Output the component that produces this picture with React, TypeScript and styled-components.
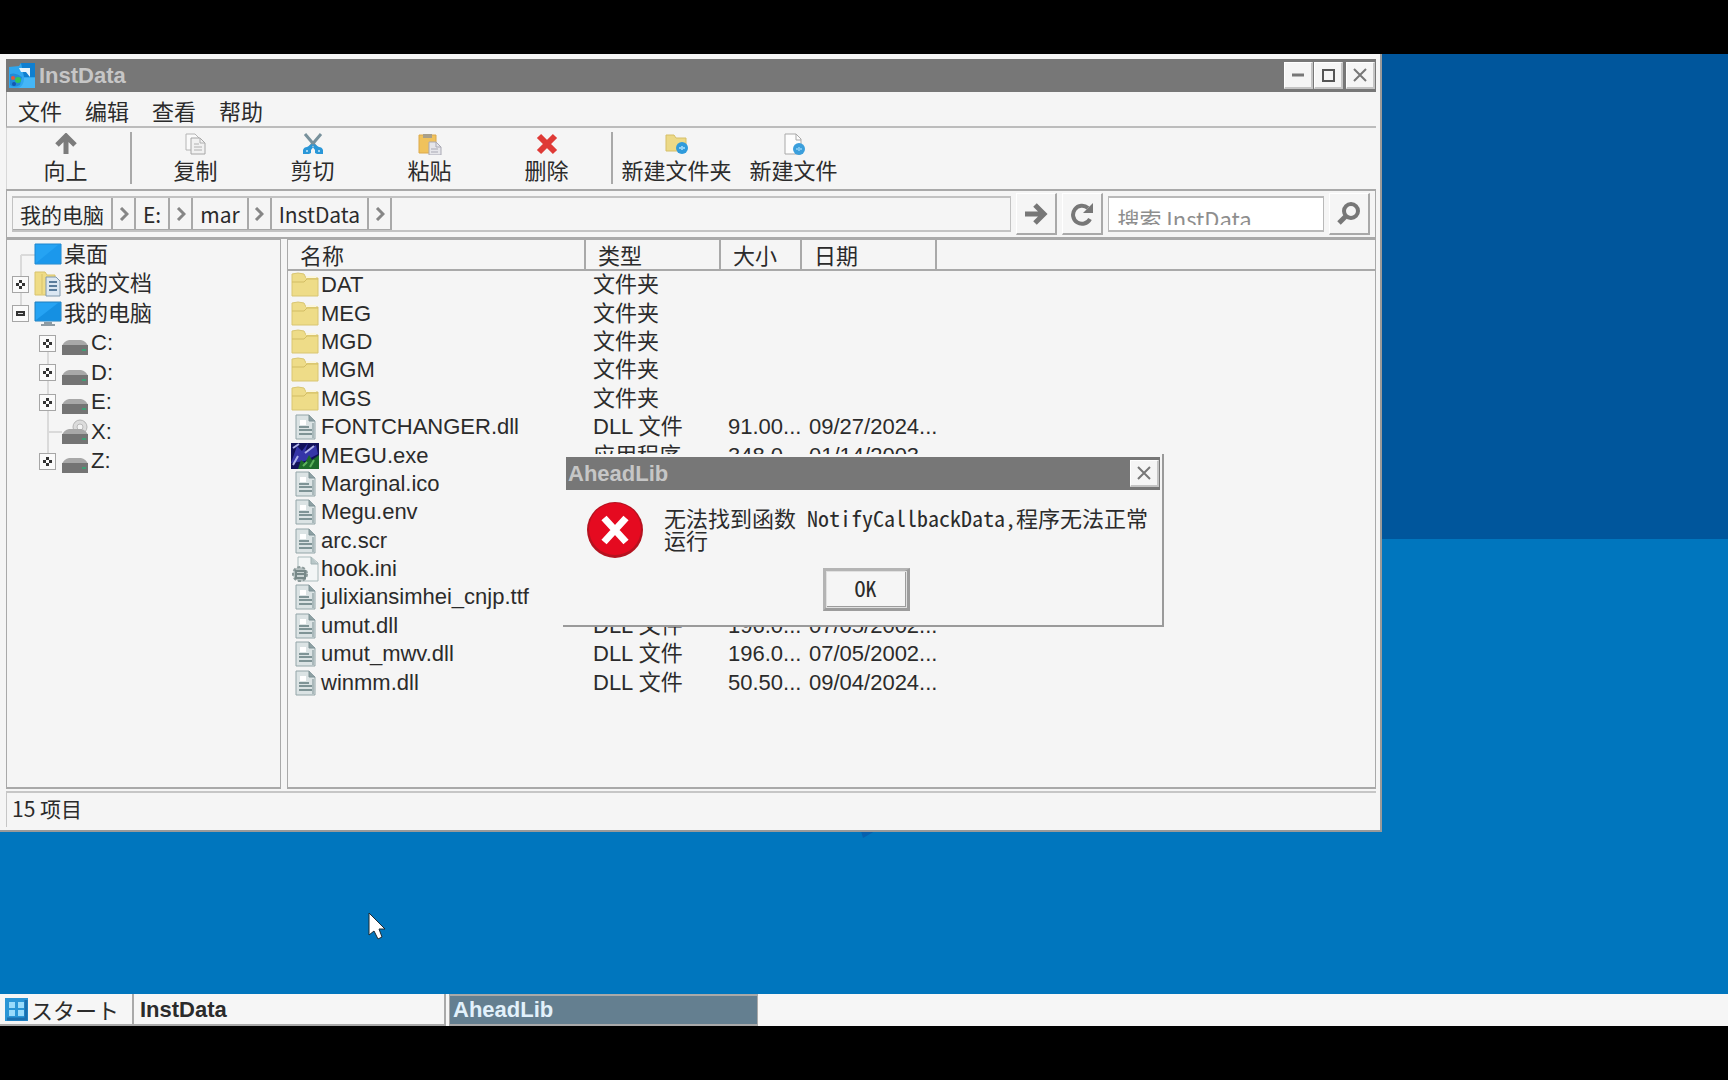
import React from "react";
import styled, { createGlobalStyle, css } from "styled-components";

const sans = `"Liberation Sans", "Noto Sans CJK SC", sans-serif`;
const cjk = `"Noto Sans CJK SC", sans-serif`;
const cjkJp = `"Noto Sans CJK JP", sans-serif`;
const mono = `"Noto Sans Mono CJK SC", "Liberation Mono", "Noto Sans CJK SC", monospace`;

const face = "#f5f5f5";
const line = "#a9a9a9";
const caption = "#777777";
const ink = "#2b2b2b";

const GlobalStyle = createGlobalStyle`
  * { box-sizing: border-box; }
  body { margin: 0; background: #000; color: ${ink}; font: 22px/24px ${sans}; }
  button, input { font: inherit; color: inherit; border-radius: 0; }
  button { padding: 0; margin: 0; border: 0; background: none; }
  svg { display: block; flex: none; }
`;

const Screen = styled.div`
  display: flex;
  flex-direction: column;
  min-height: 100vh;
  padding: 54px 0;
  overflow: hidden;
`;

const Desktop = styled.main`
  position: relative;
  flex: 1;
  background: linear-gradient(#00569c 485px, #0076be 485px);
`;

const Fleck = styled.svg`
  position: absolute;
  left: 861px;
  top: 777px;
`;

const Pointer = styled.svg`
  position: absolute;
  left: 367px;
  top: 858px;
`;

const Frame = styled.section`
  position: absolute;
  display: flex;
  flex-direction: column;
  background: ${face};
  border: solid #9a9a9a;
  border-width: 0 2px 2px 0;
`;

const ExplorerFrame = styled(Frame)`
  left: 0;
  top: 0;
  width: 80%;
  padding: 5px 4px 3px 6px;
`;

const DialogFrame = styled(Frame)`
  left: 563px;
  top: 400px;
  width: 601px;
  padding: 3px 2px 14px 3px;
`;

const Caption = styled.header`
  display: flex;
  align-items: center;
  height: 33px;
  padding: 0 1px 0 2px;
  background: ${caption};
  color: #c6c6c6;
  font-weight: bold;
`;

const CaptionText = styled.h1`
  flex: 1;
  margin: 0 0 0 3px;
  font-size: 22px;
  line-height: 24px;
`;

const DialogTitle = styled(CaptionText)`
  margin-left: 0;
`;

const CaptionButton = styled.button<{ $apart?: boolean }>`
  display: flex;
  align-items: center;
  justify-content: center;
  width: 29px;
  height: 27px;
  margin-left: ${(p) => (p.$apart ? 3 : 1)}px;
  background: ${face};
  border: solid;
  border-width: 1px 2px 2px 1px;
  border-color: #fff #c4c4c4 #c4c4c4 #fff;
`;

const MenuBar = styled.nav`
  display: flex;
  gap: 23px;
  height: 36px;
  padding: 0 11px;
  border-bottom: 2px solid #bcbcbc;
  border-left: 1px solid ${line};
  font-family: ${cjk};
`;

const MenuItem = styled.button`
  height: 36px;
`;

const Toolbar = styled.div`
  display: flex;
  height: 61px;
  border-left: 1px solid #d8d8d8;
  font-family: ${cjk};
`;

const Tool = styled.button`
  display: flex;
  flex-direction: column;
  align-items: center;
  width: 117px;
  padding-top: 5px;
  line-height: 28px;
  white-space: nowrap;
`;

const ToolDivider = styled.div`
  width: 2px;
  margin: 4px 5px 5px 6px;
  background: ${line};
`;

const AddressRow = styled.div`
  display: flex;
  align-items: center;
  gap: 5px;
  height: 50px;
  padding: 0 5px;
  border: solid ${line};
  border-width: 2px 1px 2px 1px;
`;

const Crumbs = styled.div`
  display: flex;
  flex: 1;
  height: 36px;
  border: 2px solid #c2c2c2;
  border-left-width: 1px;
  border-right-width: 1px;
  font-family: ${cjk};
  font-size: 21px;
`;

const Crumb = styled.button`
  padding: 0 7px;
  border-right: 2px solid ${line};
  border-bottom: 1px solid ${line};
  line-height: 28px;
`;

const CrumbArrow = styled.button`
  display: flex;
  align-items: center;
  justify-content: center;
  width: 23px;
  border-right: 2px solid ${line};
  border-bottom: 1px solid ${line};
`;

const RaisedButton = styled.button`
  display: flex;
  align-items: center;
  justify-content: center;
  width: 41px;
  height: 42px;
  border: solid;
  border-width: 1px 2px 2px 1px;
  border-color: #fff ${line} ${line} #fff;
`;

const SearchBox = styled.label`
  width: 216px;
  height: 36px;
  padding-bottom: 5px;
  background: #fff;
  border: 2px solid #b9b9b9;
  border-left-width: 1px;
  border-right-width: 1px;
`;

const SearchInput = styled.input`
  display: block;
  width: 100%;
  height: 27px;
  padding: 13px 8px 0;
  border: 0;
  background: none;
  outline: 0;
  font-family: ${cjk};
  &::placeholder { color: #8e8e8e; opacity: 1; }
`;

const Panes = styled.div`
  display: grid;
  grid-template-columns: 275px 1fr;
  gap: 6px;
  min-height: 550px;
`;

const Pane = styled.div`
  border: solid ${line};
  border-width: 1px 1px 2px 1px;
`;

const TreeList = styled.ul`
  display: grid;
  grid-auto-rows: 1fr;
  position: relative;
  height: 236px;
  margin: 0;
  padding: 0 0 0 5px;
  list-style: none;
`;

const TreeLines = styled.svg`
  position: absolute;
  left: 0;
  top: 0;
`;

const TreeRow = styled.li<{ $depth: number }>`
  display: flex;
  align-items: center;
  gap: 2px;
  position: relative;
  padding-left: ${(p) => p.$depth * 27}px;
`;

const Expander = styled.button<{ $hidden?: boolean }>`
  display: flex;
  align-items: center;
  justify-content: center;
  width: 17px;
  height: 17px;
  margin-right: 3px;
  background: #fafafa;
  border: 1px solid #a6a6a6;
  ${(p) => p.$hidden && css`visibility: hidden;`}
`;

const TreeLabel = styled.span`
  font-family: ${sans};
`;

const FileTable = styled.table`
  width: 100%;
  height: 457px;
  border-collapse: separate;
  border-spacing: 0;
  table-layout: fixed;
`;

const HeadCell = styled.th<{ $last?: boolean }>`
  height: 31px;
  padding: 4px 0 0 12px;
  border-bottom: 2px solid ${line};
  border-right: ${(p) => (p.$last ? "0" : `2px solid ${line}`)};
  font-weight: normal;
  text-align: left;
`;

const Cell = styled.td`
  padding: 0 0 0 7px;
  white-space: nowrap;
`;

const NameCell = styled(Cell)`
  padding-left: 3px;
`;

const FileName = styled.div`
  display: flex;
  align-items: center;
  gap: 2px;
`;

const StatusBar = styled.footer`
  height: 36px;
  margin-top: 2px;
  padding: 3px 5px 0;
  border: solid #c6c6c6;
  border-width: 2px 0 0 1px;
  font-family: ${cjk};
  font-size: 21px;
`;

const DialogBody = styled.div`
  display: flex;
  gap: 20px;
  padding: 11px 8px 0 20px;
`;

const Message = styled.p`
  margin: 5px 0 0;
  font-family: ${mono};
  font-size: 22px;
  line-height: 22px;
`;

const OkButton = styled.button`
  align-self: center;
  width: 87px;
  height: 43px;
  margin: 9px 0 0 6px;
  padding-bottom: 3px;
  border: solid;
  border-width: 3px 5px 5px 4px;
  border-color: #b4b4b4 #9c9c9c #9c9c9c #b4b4b4;
  outline: 1px solid #e0e0e0;
  outline-offset: -4px;
  font-family: ${mono};
`;

const Taskbar = styled.footer`
  display: flex;
  height: 32px;
  background: #f6f6f6;
`;

const StartButton = styled.button`
  display: flex;
  align-items: center;
  gap: 3px;
  width: 134px;
  padding-left: 5px;
  border-right: 2px solid ${line};
  border-bottom: 2px solid ${line};
  font-family: ${cjkJp};
`;

const Task = styled.button<{ $active?: boolean }>`
  width: 312px;
  padding: 2px 0 0 6px;
  border: solid ${line};
  border-width: 0 2px 2px 0;
  font-weight: bold;
  text-align: left;
  ${(p) =>
    p.$active &&
    css`
      margin-left: 3px;
      width: 309px;
      padding: 0 0 0 3px;
      border-width: 2px 1px 2px 1px;
      background: #647f90;
      color: #e2f1fb;
    `}
`;

/* ---------- drawings ---------- */

const AppIcon = () => (
  <svg width="28" height="28" viewBox="0 0 28 28">
    <path d="M1 5l10-1 2-3h14v25H1z" fill="#2fa6ee" />
    <path d="M13 1h14v14H16z" fill="#0f7fd0" />
    <path d="M11 6h11v9l-4-5h-5z" fill="#e6f4fd" />
    <path d="M2 12q6-2 12 3l-2 8q-6 3-10 0z" fill="#1f8bd8" />
    <circle cx="5" cy="16" r="2" fill="#e0593a" />
    <circle cx="10" cy="18" r="3" fill="#31c25a" />
    <circle cx="6" cy="22" r="2" fill="#1558b0" />
    <path d="M16 16h11v10H10c4-1 6-5 6-10z" fill="#45b6f7" />
  </svg>
);

const MinIcon = () => (
  <svg width="14" height="14" viewBox="0 0 14 14"><path d="M1 7h12" stroke="#777" strokeWidth="3" /></svg>
);
const MaxIcon = () => (
  <svg width="15" height="15" viewBox="0 0 15 15"><path d="M2 2h11v11H2z" fill="none" stroke="#555" strokeWidth="2" /></svg>
);
const CloseIcon = () => (
  <svg width="14" height="14" viewBox="0 0 14 14"><path d="M1 1l12 12M13 1L1 13" stroke="#777" strokeWidth="2" /></svg>
);

const UpIcon = () => (
  <svg width="24" height="22" viewBox="0 0 24 22">
    <path d="M12 21V4M3 12l9-9 9 9" fill="none" stroke="#7c7c7c" strokeWidth="5" />
  </svg>
);
const CopyIcon = () => (
  <svg width="22" height="22" viewBox="0 0 22 22">
    <path d="M1 1h9l4 4v12H1z" fill="#fafafa" stroke="#b4b4b4" />
    <path d="M6 5h9l5 5v11H6z" fill="#f1f1f1" stroke="#a6a6a6" />
    <path d="M15 5v5h5M9 11h5M9 14h8M9 17h8" fill="none" stroke="#b0b0b0" />
  </svg>
);
const CutIcon = () => (
  <svg width="22" height="22" viewBox="0 0 22 22">
    <path d="M3 1l11 13M19 1L8 14" stroke="#78919c" strokeWidth="3" />
    <path d="M1 21v-4q1-3 4-3l5-3 2 2-3 4v3l-2 1zM21 21v-4q-1-3-4-3l-5-3-2 2 3 4v3l2 1z" fill="#2a97d8" />
    <path d="M4 17h2v2H4zM16 17h2v2h-2z" fill="#9fd3f2" />
  </svg>
);
const PasteIcon = () => (
  <svg width="24" height="22" viewBox="0 0 24 22">
    <path d="M1 2h17v18H1z" fill="#f0c25c" stroke="#dca94a" />
    <path d="M5 1h9v4H5z" fill="#a9a08a" />
    <path d="M11 9h7l5 5v8H11z" fill="#e6e6ea" stroke="#a9a9b4" />
    <path d="M18 9v5h5M13 16h7M13 19h7" fill="none" stroke="#a9a9b4" />
  </svg>
);
const DeleteIcon = () => (
  <svg width="22" height="22" viewBox="0 0 22 22">
    <path d="M3 3l16 16M19 3L3 19" stroke="#df3a36" strokeWidth="6" />
  </svg>
);
const NewFolderIcon = () => (
  <svg width="24" height="22" viewBox="0 0 24 22">
    <path d="M1 2h8l2 3h10v13H1z" fill="#ecd987" stroke="#d6bf68" />
    <circle cx="17" cy="15" r="6" fill="#2f9bdc" />
    <path d="M14 15h6M17 13v4" stroke="#8fd0f5" strokeWidth="2" />
  </svg>
);
const NewFileIcon = () => (
  <svg width="22" height="22" viewBox="0 0 22 22">
    <path d="M2 1h11l5 5v15H2z" fill="#fdfdfd" stroke="#a9a9a9" />
    <path d="M13 1v6h5" fill="none" stroke="#a9a9a9" />
    <circle cx="16" cy="16" r="6" fill="#3b9fdc" />
    <path d="M13 16h6M16 14v4" stroke="#7cc6f0" strokeWidth="2" />
  </svg>
);
const ChevronIcon = () => (
  <svg width="10" height="14" viewBox="0 0 10 14"><path d="M2 1l6 6-6 6" fill="none" stroke="#868686" strokeWidth="3" /></svg>
);
const GoIcon = () => (
  <svg width="24" height="24" viewBox="0 0 24 24">
    <path d="M1 12h19M11 3l9 9-9 9" fill="none" stroke="#777" strokeWidth="5" />
  </svg>
);
const ReloadIcon = () => (
  <svg width="24" height="24" viewBox="0 0 24 24">
    <path d="M18 6a9 9 0 1 0 2 11" fill="none" stroke="#777" strokeWidth="4" />
    <path d="M23 1v10H13z" fill="#777" />
  </svg>
);
const SearchIcon = () => (
  <svg width="24" height="24" viewBox="0 0 24 24">
    <circle cx="14" cy="9" r="7" fill="none" stroke="#777" strokeWidth="4" />
    <path d="M9 14l-7 7" stroke="#777" strokeWidth="5" />
  </svg>
);

const DesktopIcon = () => (
  <svg width="28" height="24" viewBox="0 0 28 24">
    <path d="M1 1h26v20H1z" fill="#25a3f3" stroke="#1c86cf" />
    <path d="M2 20L24 2h2v18z" fill="#1b98ec" />
  </svg>
);
const DocumentsIcon = () => (
  <svg width="28" height="26" viewBox="0 0 28 26">
    <path d="M1 1h10l2 3h8v20H1z" fill="#efdc86" stroke="#d8c36c" />
    <path d="M8 3v20" stroke="#d8c36c" />
    <path d="M12 6h10l4 4v15H12z" fill="#dbe7f2" stroke="#7f98ad" />
    <path d="M15 11h8M15 15h8M15 19h8" stroke="#5a7d9c" strokeWidth="2" />
  </svg>
);
const ComputerIcon = () => (
  <svg width="28" height="26" viewBox="0 0 28 26">
    <path d="M1 1h26v19H1z" fill="#25a3f3" stroke="#1f7fbd" />
    <path d="M2 19L24 2h2v17z" fill="#1590e2" />
    <path d="M10 21h8v2h3v2H7v-2h3z" fill="#8e9ba3" />
  </svg>
);
const DriveIcon = ({ disc }: { disc?: boolean }) => (
  <svg width="28" height="26" viewBox="0 0 28 26">
    {disc && <circle cx="19" cy="8" r="7" fill="#dcdcdc" stroke="#b4b4b4" />}
    {disc && <circle cx="19" cy="8" r="3" fill="#f4f4f4" stroke="#bababa" />}
    <path d="M1 16q2-5 7-6h12q5 1 7 6z" fill="#a8a8a8" />
    <path d="M1 15h26v10H1z" fill="#747474" />
    <path d="M21 20h4" stroke="#3f9f74" strokeWidth="2" />
  </svg>
);
const PlusMark = () => (
  <svg width="11" height="11" viewBox="0 0 11 11">
    <path d="M4 1h3v3h3v3H7v3H4V7H1V4h3z" fill="#333" />
    <path d="M4 4h3v3H4z" fill="#fff" />
  </svg>
);
const MinusMark = () => (
  <svg width="11" height="11" viewBox="0 0 11 11">
    <path d="M1 3h9v5H1z" fill="#333" />
    <path d="M3 5h5v1H3z" fill="#ddd" />
  </svg>
);

const FolderIcon = () => (
  <svg width="28" height="26" viewBox="0 0 28 26">
    <path d="M1 2q6-2 12 0l2 4h12v18H1z" fill="#eedc88" stroke="#d9c673" />
    <path d="M1 10h12l3-3h11" fill="none" stroke="#d2bd64" />
    <path d="M15 4h10v2H15z" fill="#fbf6dc" />
  </svg>
);
const FileIcon = () => (
  <svg width="28" height="26" viewBox="0 0 28 26">
    <path d="M5 1h13l6 6v18H5z" fill="#dbe3e4" stroke="#93a5a8" />
    <path d="M18 1v6h6" fill="#8da0a3" stroke="#7d9194" />
    <path d="M9 6h6v5H9z" fill="#fff" />
    <path d="M8 13h10M8 16h13M8 20h13" stroke="#7f9496" strokeWidth="2" />
    <path d="M22 9v15" stroke="#a9b8ba" strokeWidth="2" />
  </svg>
);
const IniIcon = () => (
  <svg width="28" height="26" viewBox="0 0 28 26">
    <path d="M7 1h13l7 6v18H7z" fill="#f3f6f6" stroke="#a9babb" />
    <path d="M20 1v7h7" fill="#b9c8c9" stroke="#a0b1b2" />
    <circle cx="9" cy="18" r="7" fill="#b5c0c0" stroke="#8b9999" strokeWidth="2" strokeDasharray="3 2" />
    <path d="M5 15h9v7H5zM5 18h9" fill="#c9d2d2" stroke="#778888" strokeWidth="2" />
  </svg>
);
const GameIcon = () => (
  <svg width="28" height="26" viewBox="0 0 28 26">
    <path d="M0 0h28v26H0z" fill="#11115a" />
    <path d="M0 20L6 3l5 5 6-8-3 9 11-7 2 9L14 18z" fill="#3535a8" />
    <path d="M2 5l6-4M2 22l5-9M14 10l9-7" stroke="#aeb2ea" strokeWidth="2" />
    <path d="M7 26l3-9 4 3 4-8 3 5 7-5v14z" fill="#1d6b2b" />
    <path d="M12 23l4-4M19 24l4-7" stroke="#5db35d" strokeWidth="2" />
  </svg>
);
const ErrorIcon = () => (
  <svg width="58" height="58" viewBox="0 0 58 58">
    <circle cx="29" cy="29" r="28" fill="#b5121f" />
    <circle cx="29" cy="28" r="26" fill="#e50a20" />
    <path d="M18 17l22 24M40 17L18 41" stroke="#fff" strokeWidth="7" />
  </svg>
);
const StartIcon = () => (
  <svg width="23" height="23" viewBox="0 0 23 23">
    <path d="M0 0h23v23H0z" fill="#2a95d6" />
    <path d="M21 2v19H2" fill="none" stroke="#1b6fae" strokeWidth="3" />
    <path d="M4 4h6v6H4zM13 4h6v6h-6zM4 12h6v6H4zM13 12h6v6h-6z" fill="#9adbfb" />
  </svg>
);

/* ---------- data ---------- */

const tools = [
  { label: "复制", icon: <CopyIcon /> },
  { label: "剪切", icon: <CutIcon /> },
  { label: "粘贴", icon: <PasteIcon /> },
  { label: "删除", icon: <DeleteIcon /> },
];

const crumbs = ["我的电脑", "E:", "mar", "InstData"];

const tree = [
  { label: "桌面", depth: 0, mark: "", icon: <DesktopIcon /> },
  { label: "我的文档", depth: 0, mark: "+", icon: <DocumentsIcon /> },
  { label: "我的电脑", depth: 0, mark: "-", icon: <ComputerIcon /> },
  { label: "C:", depth: 1, mark: "+", icon: <DriveIcon /> },
  { label: "D:", depth: 1, mark: "+", icon: <DriveIcon /> },
  { label: "E:", depth: 1, mark: "+", icon: <DriveIcon /> },
  { label: "X:", depth: 1, mark: "", icon: <DriveIcon disc /> },
  { label: "Z:", depth: 1, mark: "+", icon: <DriveIcon /> },
];

type FileRow = [string, string, string, string, "folder" | "file" | "ini" | "game"];

const files: FileRow[] = [
  ["DAT", "文件夹", "", "", "folder"],
  ["MEG", "文件夹", "", "", "folder"],
  ["MGD", "文件夹", "", "", "folder"],
  ["MGM", "文件夹", "", "", "folder"],
  ["MGS", "文件夹", "", "", "folder"],
  ["FONTCHANGER.dll", "DLL 文件", "91.00...", "09/27/2024...", "file"],
  ["MEGU.exe", "应用程序", "348.0...", "01/14/2003...", "game"],
  ["Marginal.ico", "", "", "", "file"],
  ["Megu.env", "", "", "", "file"],
  ["arc.scr", "", "", "", "file"],
  ["hook.ini", "", "", "", "ini"],
  ["julixiansimhei_cnjp.ttf", "", "", "", "file"],
  ["umut.dll", "DLL 文件", "196.0...", "07/05/2002...", "file"],
  ["umut_mwv.dll", "DLL 文件", "196.0...", "07/05/2002...", "file"],
  ["winmm.dll", "DLL 文件", "50.50...", "09/04/2024...", "file"],
];

const fileIcons = {
  folder: <FolderIcon />,
  file: <FileIcon />,
  ini: <IniIcon />,
  game: <GameIcon />,
};

const Explorer = () => (
  <ExplorerFrame>
    <Caption>
      <AppIcon />
      <CaptionText>InstData</CaptionText>
      <CaptionButton aria-label="最小化"><MinIcon /></CaptionButton>
      <CaptionButton aria-label="最大化"><MaxIcon /></CaptionButton>
      <CaptionButton aria-label="关闭" $apart><CloseIcon /></CaptionButton>
    </Caption>
    <MenuBar>
      {["文件", "编辑", "查看", "帮助"].map((m) => (
        <MenuItem key={m}>{m}</MenuItem>
      ))}
    </MenuBar>
    <Toolbar>
      <Tool><UpIcon />向上</Tool>
      <ToolDivider />
      {tools.map((t) => (
        <Tool key={t.label}>{t.icon}{t.label}</Tool>
      ))}
      <ToolDivider />
      <Tool><NewFolderIcon />新建文件夹</Tool>
      <Tool><NewFileIcon />新建文件</Tool>
    </Toolbar>
    <AddressRow>
      <Crumbs>
        {crumbs.map((c) => (
          <React.Fragment key={c}>
            <Crumb>{c}</Crumb>
            <CrumbArrow aria-label="展开"><ChevronIcon /></CrumbArrow>
          </React.Fragment>
        ))}
      </Crumbs>
      <RaisedButton aria-label="转到"><GoIcon /></RaisedButton>
      <RaisedButton aria-label="刷新"><ReloadIcon /></RaisedButton>
      <SearchBox>
        <SearchInput aria-label="搜索" placeholder="搜索 InstData" />
      </SearchBox>
      <RaisedButton aria-label="搜索"><SearchIcon /></RaisedButton>
    </AddressRow>
    <Panes>
      <Pane>
        <TreeList>
          <TreeLines width="80" height="236" viewBox="0 0 80 236">
            <path d="M14 15h14M14 15v58M41 104v117M41 192h14" fill="none" stroke="#dadada" strokeWidth="2" />
          </TreeLines>
          {tree.map((n) => (
            <TreeRow key={n.label} $depth={n.depth}>
              <Expander $hidden={!n.mark} aria-label="展开">
                {n.mark === "-" ? <MinusMark /> : <PlusMark />}
              </Expander>
              {n.icon}
              <TreeLabel>{n.label}</TreeLabel>
            </TreeRow>
          ))}
        </TreeList>
      </Pane>
      <Pane>
        <FileTable>
          <colgroup>
            <col width="298" />
            <col width="135" />
            <col width="81" />
            <col width="135" />
            <col />
          </colgroup>
          <thead>
            <tr>
              <HeadCell>名称</HeadCell>
              <HeadCell>类型</HeadCell>
              <HeadCell>大小</HeadCell>
              <HeadCell>日期</HeadCell>
              <HeadCell $last />
            </tr>
          </thead>
          <tbody>
            {files.map(([name, type, size, date, icon]) => (
              <tr key={name}>
                <NameCell><FileName>{fileIcons[icon]}{name}</FileName></NameCell>
                <Cell>{type}</Cell>
                <Cell>{size}</Cell>
                <Cell>{date}</Cell>
                <Cell />
              </tr>
            ))}
          </tbody>
        </FileTable>
      </Pane>
    </Panes>
    <StatusBar>15 项目</StatusBar>
  </ExplorerFrame>
);

const ErrorDialog = () => (
  <DialogFrame role="alertdialog" aria-label="AheadLib">
    <Caption>
      <DialogTitle as="h2">AheadLib</DialogTitle>
      <CaptionButton aria-label="关闭"><CloseIcon /></CaptionButton>
    </Caption>
    <DialogBody>
      <ErrorIcon />
      <Message>无法找到函数 NotifyCallbackData,程序无法正常运行</Message>
    </DialogBody>
    <OkButton>OK</OkButton>
  </DialogFrame>
);

export default function App() {
  return (
    <Screen>
      <GlobalStyle />
      <Desktop>
        <Fleck width="14" height="8" viewBox="0 0 14 8"><path d="M0 0h14L2 7z" fill="#0560ae" /></Fleck>
        <Explorer />
        <ErrorDialog />
        <Pointer width="20" height="28" viewBox="0 0 20 28">
          <path d="M2 1v22l5-4 4 8 4-2-3-8h6z" fill="#fff" stroke="#1c2a33" strokeWidth="1" />
        </Pointer>
      </Desktop>
      <Taskbar>
        <StartButton><StartIcon />スタート</StartButton>
        <Task>InstData</Task>
        <Task $active>AheadLib</Task>
      </Taskbar>
    </Screen>
  );
}
